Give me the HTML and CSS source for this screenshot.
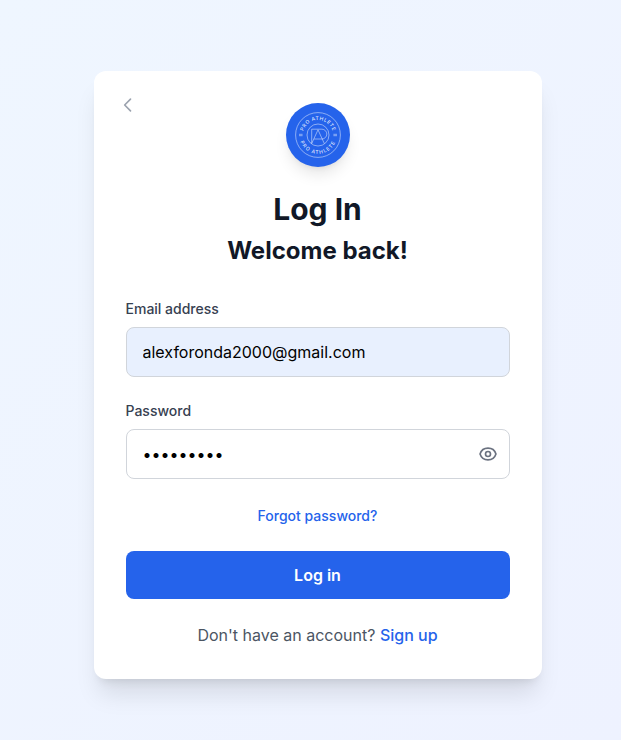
FILE: index.html
```html
<!DOCTYPE html>
<html lang="en">
<head>
  <meta charset="utf-8">
  <meta name="viewport" content="width=device-width, initial-scale=1">
  <title>Log In</title>
  <link rel="stylesheet" href="styles.css">
</head>
<body>
  <main class="card">
    <button class="back" type="button" aria-label="Go back">
      <svg class="icon" viewBox="0 0 24 24" aria-hidden="true"><path d="M15 19l-7-7 7-7"/></svg>
    </button>

    <header class="header">
      <svg class="logo" viewBox="0 0 64 64" role="img" aria-label="Pro Athlete">
        <defs>
          <path id="arc-top" d="M17 32a15 15 0 0 1 30 0"/>
          <path id="arc-bottom" d="M13.2 32a18.8 18.8 0 0 0 37.6 0"/>
        </defs>
        <g class="logo-lines">
          <circle cx="32" cy="32" r="22.4"/>
          <circle cx="32" cy="32" r="11"/>
          <path d="M25.7 40.5V26.2h10.2a4.9 4.9 0 0 1 0 9.8H28"/>
          <path d="M25.7 40.5L32 26.8l6.3 13.7"/>
          <path d="M13 31.3h3.6M13 32.7h3.6M47.4 31.3h3.6M47.4 32.7h3.6"/>
        </g>
        <g class="logo-text">
          <text class="logo-text-top"><textPath href="#arc-top" startOffset="50%">PRO ATHLETE</textPath></text>
          <text class="logo-text-bottom"><textPath href="#arc-bottom" startOffset="50%">PRO ATHLETE</textPath></text>
        </g>
      </svg>
      <h1 class="title">Log In</h1>
      <h2 class="subtitle">Welcome back!</h2>
    </header>

    <form class="form">
      <div class="field">
        <label class="label" for="email">Email address</label>
        <input class="input input-filled" id="email" type="email" value="alexforonda2000@gmail.com">
      </div>
      <div class="field">
        <label class="label" for="password">Password</label>
        <div class="password">
          <input class="input input-password" id="password" type="password" value="athlete24">
          <button class="reveal" type="button" aria-label="Show password">
            <svg class="icon" viewBox="0 0 24 24" aria-hidden="true">
              <path d="M15 12a3 3 0 11-6 0 3 3 0 016 0z"/>
              <path d="M2.458 12C3.732 7.943 7.523 5 12 5c4.478 0 8.268 2.943 9.542 7-1.274 4.057-5.064 7-9.542 7-4.477 0-8.268-2.943-9.542-7z"/>
            </svg>
          </button>
        </div>
      </div>
      <p class="line"><a class="link link-small" href="#">Forgot password?</a></p>
      <button class="submit" type="submit">Log in</button>
      <p class="line">Don't have an account? <a class="link" href="#">Sign up</a></p>
    </form>
  </main>
</body>
</html>
```
FILE: styles.css
```css
* {
  box-sizing: border-box;
}

body {
  margin: 0;
  min-height: 100vh;
  padding: 26px 16px 16px 30px;
  display: flex;
  align-items: center;
  justify-content: center;
  background: linear-gradient(to bottom right, #eff6ff, #eef2ff);
  color: #111827;
  font-family: Inter, "Liberation Sans", sans-serif;
  font-size: 16px;
  line-height: 24px;
}

h1,
h2,
p {
  margin: 0;
}

button,
input {
  font: inherit;
}

button {
  padding: 0;
  border: 0;
  background: none;
  cursor: pointer;
}

.card {
  position: relative;
  width: 100%;
  max-width: 448px;
  padding: 32px;
  border-radius: 12px;
  background: #fff;
  box-shadow: 0 20px 25px -5px rgba(0, 0, 0, 0.1), 0 8px 10px -6px rgba(0, 0, 0, 0.1);
}

.icon {
  display: block;
  width: 20px;
  height: 20px;
  fill: none;
  stroke: currentColor;
  stroke-width: 2;
  stroke-linecap: round;
  stroke-linejoin: round;
}

.back {
  position: absolute;
  top: 24px;
  left: 24px;
  color: #9ca3af;
}

.header {
  display: flex;
  flex-direction: column;
  align-items: center;
  margin-bottom: 32px;
  text-align: center;
}

.logo {
  width: 64px;
  height: 64px;
  margin-bottom: 24px;
  border-radius: 50%;
  background: #2563eb;
  box-shadow: 0 10px 15px -3px rgba(0, 0, 0, 0.1), 0 4px 6px -4px rgba(0, 0, 0, 0.1);
}

.logo-lines {
  fill: none;
  stroke: #fff;
  stroke-width: 0.6;
  stroke-opacity: 0.8;
}

.logo-text {
  fill: #fff;
  fill-opacity: 0.85;
  font-size: 5px;
  font-weight: 500;
  text-anchor: middle;
}

.logo-text-top {
  letter-spacing: 0.5px;
}

.logo-text-bottom {
  letter-spacing: 1px;
}

.title {
  margin-bottom: 8px;
  font-size: 30px;
  font-weight: 700;
  line-height: 36px;
}

.subtitle {
  font-size: 24px;
  font-weight: 700;
  line-height: 32px;
}

.form {
  display: flex;
  flex-direction: column;
  gap: 24px;
}

.field {
  display: flex;
  flex-direction: column;
  gap: 8px;
}

.label {
  color: #374151;
  font-size: 14px;
  font-weight: 500;
  line-height: 20px;
}

.input {
  width: 100%;
  height: 50px;
  padding: 12px 16px;
  border: 1px solid #d1d5db;
  border-radius: 8px;
  background: #fff;
  color: #000;
}

.input-filled {
  background: #e8f0fe;
}

.input-password {
  padding-right: 48px;
}

.password {
  position: relative;
}

.reveal {
  position: absolute;
  top: 0;
  right: 0;
  bottom: 0;
  padding: 0 12px;
  color: #6b7280;
}

.line {
  color: #4b5563;
  text-align: center;
}

.link {
  color: #2563eb;
  font-weight: 500;
  text-decoration: none;
}

.link-small {
  font-size: 14px;
  line-height: 20px;
}

.submit {
  padding: 12px 16px;
  border-radius: 8px;
  background: #2563eb;
  color: #fff;
  font-weight: 600;
}
```
